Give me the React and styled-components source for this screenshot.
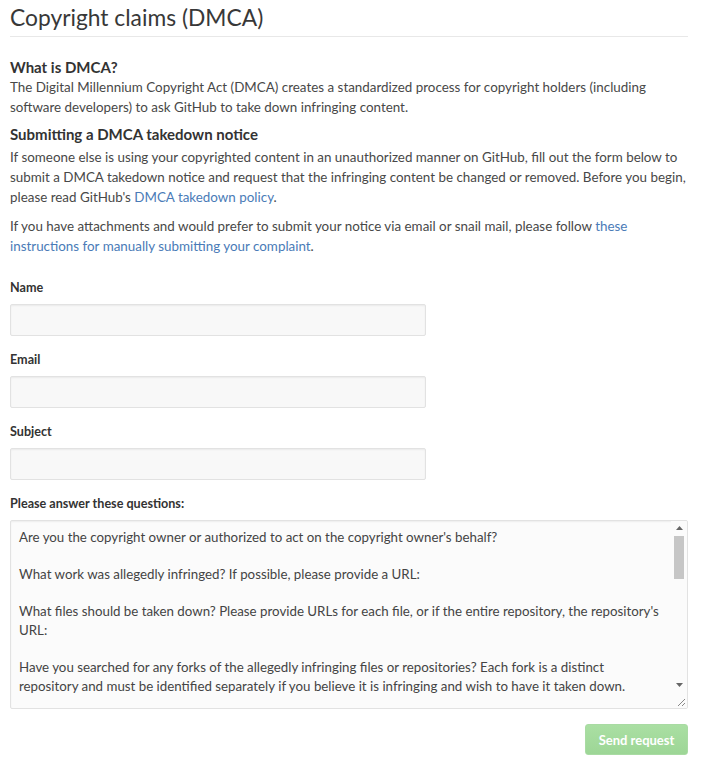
import React from "react";
import styled, { createGlobalStyle } from "styled-components";

const Global = createGlobalStyle`
  html, body { margin: 0; padding: 0; background: #fff; }
  body { font-family: "Lato", "Open Sans", sans-serif; color: #333; }
  * { box-sizing: border-box; }
`;

const Page = styled.div`
  width: 680px;
  margin-left: 10px;
  padding-bottom: 20px;
`;

const Title = styled.h1`
  margin: 0 2px 0 0;
  padding: 2px 0 4px;
  font-size: 22.8px;
  font-weight: 400;
  line-height: 30px;
  color: #383838;
  border-bottom: 1px solid #e8e8e8;
`;

const Heading = styled.h3`
  margin: ${(p) => p.$top || 0}px 0 0;
  font-size: 15px;
  font-weight: 700;
  line-height: 20px;
  color: #333;
`;

const Para = styled.p`
  margin: ${(p) => p.$top || 0}px 0 0;
  font-size: 13.4px;
  line-height: 20px;
  color: #484848;
`;

const Link = styled.a`
  color: #4a7bb7;
  text-decoration: none;
`;

const Form = styled.form`
  display: flex;
  flex-direction: column;
  margin-top: 23px;
`;

const Field = styled.div`
  display: flex;
  flex-direction: column;
  gap: 7px;
  margin-bottom: 15px;
`;

const Label = styled.label`
  font-size: 12.6px;
  font-weight: 700;
  line-height: 18px;
  color: #333;
`;

const Input = styled.input`
  width: 416px;
  height: 32px;
  border: 1px solid #e2e2e2;
  border-radius: 2px;
  background: #f8f8f8;
  box-shadow: inset 0 1px 2px rgba(0, 0, 0, 0.06);
  padding: 6px 8px;
  font: inherit;
`;

const TextBox = styled.div`
  display: flex;
  width: 678px;
  height: 189px;
  border: 1px solid #e2e2e2;
  border-radius: 2px;
  background: #fbfbfb;
  box-shadow: inset 0 1px 2px rgba(0, 0, 0, 0.06);
  overflow: hidden;
`;

const TextArea = styled.textarea`
  flex: 1;
  min-width: 0;
  border: none;
  outline: none;
  background: transparent;
  padding: 7px 8px;
  font-family: "Lato", "Open Sans", sans-serif;
  font-size: 13.3px;
  line-height: 18.6px;
  color: #444;
  resize: none;
  overflow: hidden;
`;

const ScrollBar = styled.div`
  display: flex;
  flex-direction: column;
  width: 16px;
  background: #fbfbfb;
`;

const Arrow = styled.div`
  display: flex;
  align-items: center;
  justify-content: center;
  height: 14px;
  color: #666;
`;

const Track = styled.div`
  flex: 1;
  padding: 1px 3px;
`;

const Thumb = styled.div`
  height: 43px;
  background: #c6c6c6;
`;

const Corner = styled.div`
  display: flex;
  align-items: flex-end;
  justify-content: flex-end;
  height: 16px;
  padding: 0 1px 1px 0;
  color: #888;
`;

const Actions = styled.div`
  display: flex;
  justify-content: flex-end;
  padding-right: 2px;
`;

const Button = styled.button`
  width: 103px;
  height: 31px;
  padding: 0;
  border: 1px solid #a9dba3;
  border-radius: 3px;
  background: linear-gradient(#aadfa3, #9dd696);
  color: #fff;
  font-family: "Lato", "Open Sans", sans-serif;
  font-size: 13px;
  font-weight: 700;
  cursor: default;
`;

const questions = `Are you the copyright owner or authorized to act on the copyright owner's behalf?

What work was allegedly infringed? If possible, please provide a URL:

What files should be taken down? Please provide URLs for each file, or if the entire repository, the repository's URL:

Have you searched for any forks of the allegedly infringing files or repositories? Each fork is a distinct repository and must be identified separately if you believe it is infringing and wish to have it taken down.

Is the work licensed under an open source license? If so, which open source license? Are the allegedly infringing files being used under the open source license, or are they in violation of the license?`;

export default function App() {
  return (
    <Page>
      <Global />
      <Title>Copyright claims (DMCA)</Title>
      <Heading $top={20}>What is DMCA?</Heading>
      <Para>
        The Digital Millennium Copyright Act (DMCA) creates a standardized process for copyright holders (including
        software developers) to ask GitHub to take down infringing content.
      </Para>
      <Heading $top={7}>Submitting a DMCA takedown notice</Heading>
      <Para $top={3}>
        If someone else is using your copyrighted content in an unauthorized manner on GitHub, fill out the form below to
        submit a DMCA takedown notice and request that the infringing content be changed or removed. Before you begin,
        please read GitHub's <Link href="#">DMCA takedown policy</Link>.
      </Para>
      <Para $top={9}>
        If you have attachments and would prefer to submit your notice via email or snail mail, please follow{" "}
        <Link href="#">these instructions for manually submitting your complaint</Link>.
      </Para>
      <Form onSubmit={(e) => e.preventDefault()}>
        <Field>
          <Label>Name</Label>
          <Input type="text" />
        </Field>
        <Field>
          <Label>Email</Label>
          <Input type="email" />
        </Field>
        <Field>
          <Label>Subject</Label>
          <Input type="text" />
        </Field>
        <Field>
          <Label>Please answer these questions:</Label>
          <TextBox>
            <TextArea readOnly defaultValue={questions} />
            <ScrollBar>
              <Arrow>
                <svg width="7" height="4" viewBox="0 0 7 4"><path d="M0 4 L3.5 0 L7 4 Z" fill="currentColor" /></svg>
              </Arrow>
              <Track>
                <Thumb />
              </Track>
              <Arrow>
                <svg width="7" height="4" viewBox="0 0 7 4"><path d="M0 0 L3.5 4 L7 0 Z" fill="currentColor" /></svg>
              </Arrow>
              <Corner>
                <svg width="10" height="10" viewBox="0 0 10 10">
                  <path d="M9 2 L2 9 M9 6 L6 9" stroke="currentColor" strokeWidth="1" />
                </svg>
              </Corner>
            </ScrollBar>
          </TextBox>
        </Field>
        <Actions>
          <Button type="button">Send request</Button>
        </Actions>
      </Form>
    </Page>
  );
}
